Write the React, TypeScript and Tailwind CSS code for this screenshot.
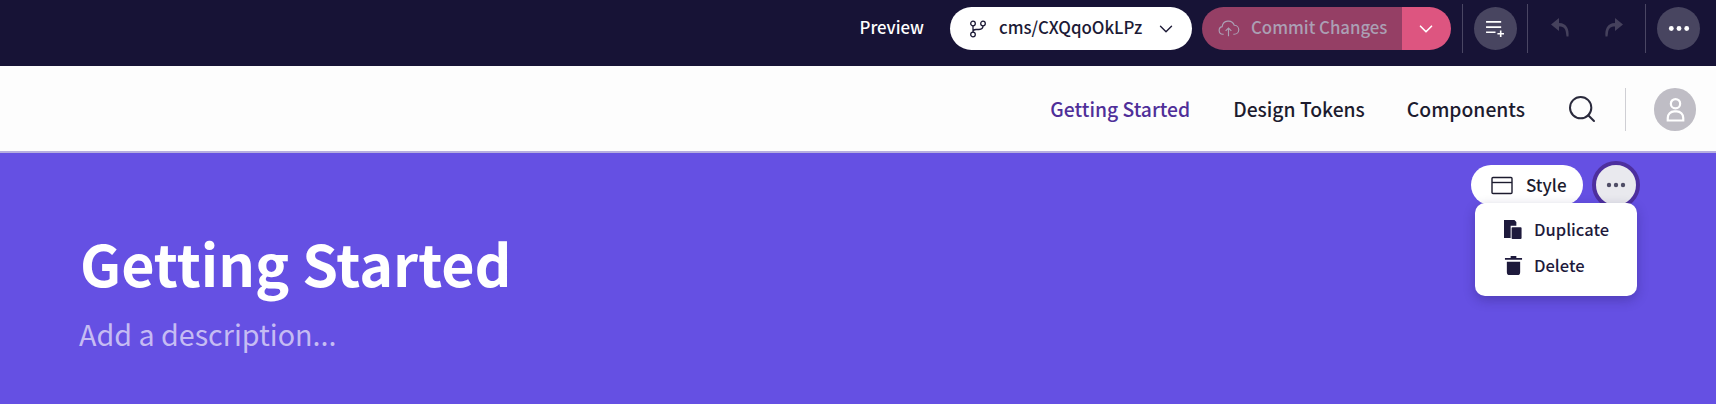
import React from 'react';
import { ChevronDown, Search } from 'lucide-react';

const font = "font-['Noto_Sans_CJK_SC','Noto_Sans',sans-serif]";

const Dots = ({ className }: { className: string }) => (
  <svg viewBox="0 0 20 6" className={className} fill="currentColor">
    <circle cx="3" cy="3" r="2.2" />
    <circle cx="10" cy="3" r="2.2" />
    <circle cx="17" cy="3" r="2.2" />
  </svg>
);

const Divider = () => <div className="w-px h-[49px] bg-[#4a4663]" />;

const TopBar = () => (
  <div className="h-[66px] bg-[#171336] flex items-start pt-[7px] justify-end pr-[16px]">
    <div className="h-[43px] flex items-center pb-[2px] mr-[26px]">
      <span className="text-white text-[16.8px] font-medium leading-none">Preview</span>
    </div>
    <button className="w-[242px] h-[43px] rounded-full bg-white flex items-center pl-[19px] text-[#1c1a36] mr-[10px]">
      <svg viewBox="0 0 18 18" className="w-[18px] h-[18px]" fill="none" stroke="currentColor" strokeWidth="1.3">
        <circle cx="4" cy="3.5" r="2.3" />
        <circle cx="14" cy="3.5" r="2.3" />
        <circle cx="4" cy="14.5" r="2.3" />
        <path d="M4 5.8v6.4M14 5.8c0 2.7-1.5 3.7-4 3.7H7c-2 0-3 .8-3 2.7" />
      </svg>
      <span className="text-[16.8px] font-medium leading-none ml-[12px] pb-[2px]">cms/CXQqoOkLPz</span>
      <ChevronDown size={22} strokeWidth={1.5} className="ml-[13px]" />
    </button>
    <div className="w-[249px] h-[43px] rounded-full overflow-hidden flex">
      <div className="w-[200px] bg-[#953f65] flex items-center pl-[15px] text-[#ab9fb4]">
        <svg viewBox="0 0 24 24" className="w-[23px] h-[23px]" fill="none" stroke="currentColor" strokeWidth="1.2">
          <path d="M7 18H6a4 4 0 0 1-.6-7.9A6.5 6.5 0 0 1 18 8.6a4.7 4.7 0 0 1 0 9.4h-1" />
          <path d="M12 20v-8M9 14.5l3-3 3 3" />
        </svg>
        <span className="text-[16.8px] font-medium leading-none ml-[11px] pb-[2px] whitespace-nowrap">Commit Changes</span>
      </div>
      <div className="flex-1 bg-[#dd5580] flex items-center justify-center text-white pr-[2px]">
        <ChevronDown size={22} strokeWidth={1.8} />
      </div>
    </div>
    <div className="ml-[11px] -mt-[3px]"><Divider /></div>
    <button className="ml-[11px] w-[43px] h-[43px] rounded-full bg-[#484560] flex items-center justify-center text-white">
      <svg viewBox="0 0 20 18" className="w-[19px] h-[17px]" fill="none" stroke="currentColor" strokeWidth="1.7">
        <path d="M0 2h16M0 7.5h16M0 13h10M12 14.5h7M15.5 11v7" />
      </svg>
    </button>
    <div className="ml-[10px] -mt-[3px]"><Divider /></div>
    <div className="w-[118px] h-[43px] flex items-center justify-center gap-[34px] pb-[3px] text-[#45415c]">
      <svg viewBox="0 0 20 20" className="w-[20px] h-[20px]" fill="currentColor">
        <path d="M9 1 1 7.5 9 14V9.6c4 0 6.5 1.4 7 6.4l.5 3.5h2c.8-7-1.500-13.500-9.500-13.500z" />
      </svg>
      <svg viewBox="0 0 20 20" className="w-[20px] h-[20px] scale-x-[-1]" fill="currentColor">
        <path d="M9 1 1 7.5 9 14V9.6c4 0 6.5 1.4 7 6.4l.5 3.5h2c.8-7-1.500-13.500-9.500-13.500z" />
      </svg>
    </div>
    <div className="-mt-[3px] -ml-px"><Divider /></div>
    <button className="ml-[11px] w-[43px] h-[43px] rounded-full bg-[#484560] flex items-center justify-center text-white">
      <Dots className="w-[22px] h-[7px]" />
    </button>
  </div>
);

const NavBar = () => (
  <div className="h-[87px] bg-[#fdfdfd] border-b-[2px] border-[#b6aedf] pt-[1px] flex items-center justify-end pr-[20px] text-[19.3px] font-medium text-[#1c1b2e]">
    <a className="text-[#4f2f99]">Getting Started</a>
    <a className="ml-[43px]">Design Tokens</a>
    <a className="ml-[42px]">Components</a>
    <Search size={32} strokeWidth={1.5} className="ml-[41px] text-[#2a2a3c]" />
    <div className="w-px h-[43px] bg-[#cfcfd4] ml-[27px]" />
    <div className="ml-[28px] w-[42px] h-[43px] rounded-full bg-[#bfbdc5] flex items-center justify-center">
      <svg viewBox="0 0 24 24" className="w-[31px] h-[31px]" fill="none" stroke="white" strokeWidth="1.7">
        <circle cx="12" cy="7.5" r="3.6" />
        <path d="M6 20.5v-2a5 5 0 0 1 5-5h2a5 5 0 0 1 5 5v2z" />
      </svg>
    </div>
  </div>
);

const Hero = () => (
  <div className="relative h-[251px] bg-[#6550e3] pl-[80px] pt-[71px]">
    <h1 className="text-[57.4px] font-bold text-white leading-[76px]">Getting Started</h1>
    <p className="text-[28.7px] text-[#c5bcf3] leading-[40px] mt-[14px] -ml-px">Add a description...</p>

    {/* toolbar + open menu */}
    <div className="absolute top-[8px] right-[76px] flex items-center">
      <button className="w-[112px] h-[40px] rounded-full bg-white flex items-center pl-[20px] text-[#1c1b2e] text-[17px] font-medium">
        <svg viewBox="0 0 22 18" className="w-[22px] h-[19px]" fill="none" stroke="currentColor" strokeWidth="1.4">
          <rect x="1" y="1" width="20" height="16" rx="1" />
          <path d="M1 6h20" />
        </svg>
        <span className="ml-[13px] leading-none pb-[2px]">Style</span>
      </button>
      <div className="ml-[9px] w-[48px] h-[48px] rounded-full bg-[#e9e9ee] border-[4px] border-[#4d2f9e] flex items-center justify-center text-[#4f4d66]">
        <Dots className="w-[20px] h-[6px]" />
      </div>
    </div>
    <div className="absolute top-[50px] right-[79px] w-[162px] h-[93px] rounded-[10px] bg-white shadow-[0_4px_12px_rgba(30,20,80,0.3)] pt-[14px] pl-[29px] text-[16.5px] font-medium text-[#1e1a3c]">
      <div className="flex items-center h-[24px]">
        <svg viewBox="0 0 20 20" className="w-[19px] h-[19px]" fill="currentColor">
          <path d="M0 0h11l2 2v4H7v13H0z" />
          <rect x="8" y="7.5" width="10.5" height="12.5" rx="1" />
        </svg>
        <span className="ml-[11px] leading-none">Duplicate</span>
      </div>
      <div className="flex items-center h-[24px] mt-[12px]">
        <svg viewBox="0 0 20 20" className="w-[19px] h-[19px]" fill="currentColor">
          <path d="M7 0h6v2h6v2H1V2h6zM3 6h14v11a3 3 0 0 1-3 3H6a3 3 0 0 1-3-3z" />
        </svg>
        <span className="ml-[11px] leading-none">Delete</span>
      </div>
    </div>
  </div>
);

export default function App() {
  return (
    <div className={`${font} w-[1716px] h-[404px] overflow-hidden`}>
      <TopBar />
      <NavBar />
      <Hero />
    </div>
  );
}
